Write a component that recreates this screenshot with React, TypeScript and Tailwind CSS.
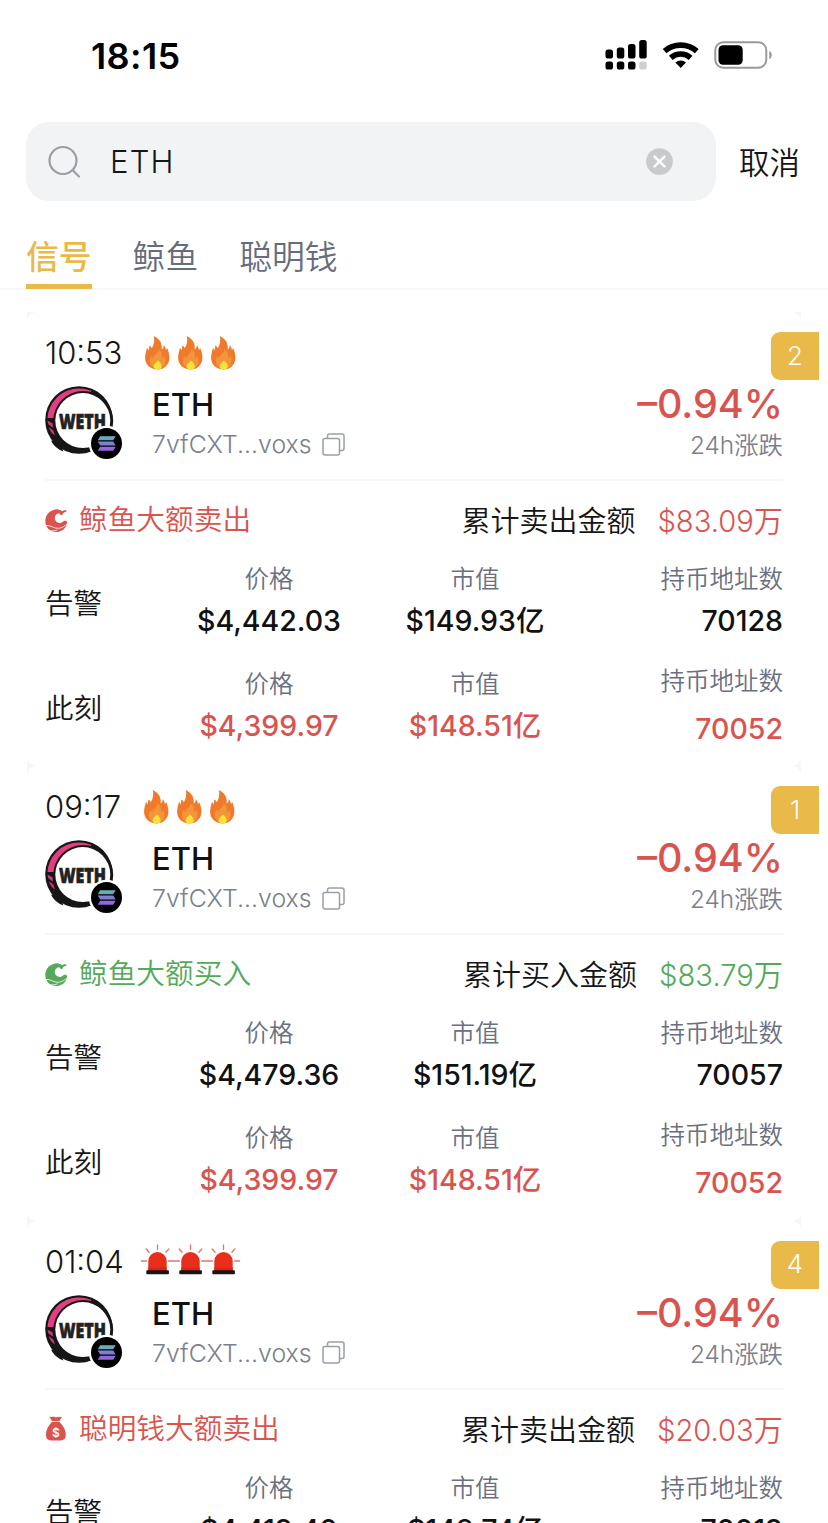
import { useState } from 'react';
import type { ReactNode } from 'react';

interface Quote {
  price: string;
  cap: string;
  holders: string;
}
interface Signal {
  id: number;
  time: string;
  level: 'fire' | 'siren';
  count: number;
  kind: 'whale' | 'smart';
  side: 'buy' | 'sell';
  title: string;
  totalLabel: string;
  total: string;
  alert: Quote;
  now?: Quote;
}

const signals: Signal[] = [
  {
    id: 1,
    time: '10:53',
    level: 'fire',
    count: 2,
    kind: 'whale',
    side: 'sell',
    title: '鲸鱼大额卖出',
    totalLabel: '累计卖出金额',
    total: '$83.09万',
    alert: { price: '$4,442.03', cap: '$149.93亿', holders: '70128' },
    now: { price: '$4,399.97', cap: '$148.51亿', holders: '70052' },
  },
  {
    id: 2,
    time: '09:17',
    level: 'fire',
    count: 1,
    kind: 'whale',
    side: 'buy',
    title: '鲸鱼大额买入',
    totalLabel: '累计买入金额',
    total: '$83.79万',
    alert: { price: '$4,479.36', cap: '$151.19亿', holders: '70057' },
    now: { price: '$4,399.97', cap: '$148.51亿', holders: '70052' },
  },
  {
    id: 3,
    time: '01:04',
    level: 'siren',
    count: 4,
    kind: 'smart',
    side: 'sell',
    title: '聪明钱大额卖出',
    totalLabel: '累计卖出金额',
    total: '$20.03万',
    alert: { price: '$4,419.40', cap: '$148.74亿', holders: '70019' },
  },
];

const tabs = ['信号', '鲸鱼', '聪明钱'];

function StatusBar() {
  return (
    <div className="flex h-[122px] items-start justify-between pt-[35px] pr-[56px] pl-[91px]">
      <span className="text-[36px] leading-[42px] font-semibold tracking-[0.4px] text-black">18:15</span>
      <svg width="167" height="30" viewBox="0 0 167 30" className="mt-[5px]">
        <rect x="0.5" y="9.5" width="7.5" height="9" rx="2.6" />
        <rect x="11.8" y="7.5" width="7.5" height="11" rx="2.6" />
        <rect x="23" y="4" width="7.5" height="14.5" rx="2.6" />
        <rect x="34.2" y="0" width="7.5" height="18.5" rx="2.6" />
        <rect x="0.5" y="21.5" width="7.5" height="8" rx="2.6" />
        <rect x="11.8" y="21.5" width="7.5" height="8" rx="2.6" />
        <rect x="23" y="21.5" width="7.5" height="8" rx="2.6" />
        <rect x="34.2" y="21.5" width="7.5" height="8" rx="2.6" fill="#d0d0d0" />
        <g fill="none" stroke="#000" strokeWidth="5.6">
          <path d="M59.600 11.200a24.500 24.500 0 0 1 32.200 0" />
          <path d="M65.800 17.800a15 15 0 0 1 19.800 0" />
        </g>
        <path d="M70.400 22.400a8.200 8.200 0 0 1 10.600 0L75.700 28Z" />
        <rect x="110.3" y="2.3" width="51" height="25.4" rx="8" fill="none" stroke="#999" strokeWidth="2" />
        <rect x="113.5" y="5.2" width="24.2" height="19.5" rx="4.5" />
        <path d="M164.300 10.800q2.600 1.200 2.600 4.200t-2.600 4.200Z" fill="#999" />
      </svg>
    </div>
  );
}

function Flame() {
  return (
    <svg width="33" height="34" viewBox="0 0 33 34">
      <path
        d="M12.800 0c6 3 8.600 7.400 7.900 13.400 1.500-.9 2-2.400 2-4.500 1.500 1.700 2 3.300 2.200 5.100.7-.4 1-1.100 1.100-2.200 1.600 3.600 2.400 6.500 2.400 9.700 0 7.300-5.200 12-12 12s-12.300-4.700-12.300-11.700c0-4 1.200-6.800 1.800-9.800 1 .7 1.300 1.600 1.300 2.600 1-1.600 1.100-3.300 1-5.100 1.300.5 2.100 1.500 2.600 2.800C13 8.600 13.800 4.600 12.800 0Z"
        fill="#f07a2b"
      />
      <path
        d="M17.600 13c-.2 4.500-4.600 5.600-5.400 9-.8-.6-1.100-1.400-1.100-2.600-1.400 1.800-2.200 3.300-2.200 5.700 0 4.700 3.400 7.700 7.700 7.700 4.700 0 7.900-3.100 7.900-7.600 0-2-.7-3.800-1.700-5.400-.2 1.300-.8 2.200-1.900 2.800C21.500 18.500 20.600 15.300 17.600 13Z"
        fill="#f3953a"
      />
      <path d="M16.800 24.500c2.300 1.800 3.900 3.600 3.900 5.900 0 2-1.700 3.200-3.900 3.200s-4.200-1.200-4.200-3.200c0-2.300 2.600-3.600 4.200-5.900Z" fill="#f8e339" />
    </svg>
  );
}

function Siren() {
  return (
    <svg width="33" height="34" viewBox="0 0 33 34" className="overflow-visible">
      <g stroke="#e0766c" strokeWidth="1.3" strokeLinecap="round">
        <path d="M16.500 1v4.500M5.200 5l2.900 3.300M27.800 5l-2.900 3.300M.4 17h5M27.600 17h5" />
      </g>
      <path d="M7.300 27.500V17.300a9.200 9.200 0 0 1 18.400 0v10.200Z" fill="#ea2e1c" />
      <path d="M7.300 27v-3.500h18.400V27Z" fill="#d3281b" />
      <rect x="5.300" y="26.300" width="22.600" height="4" rx="0.8" fill="#1d1416" />
    </svg>
  );
}

function TokenLogo() {
  return (
    <svg width="80" height="76" viewBox="0 0 80 76" className="-ml-px">
      <defs>
        <clipPath id="crescent">
          <rect x="0" y="0" width="47" height="33" />
        </clipPath>
        <linearGradient id="sol" x1="0" y1="0" x2="0" y2="1">
          <stop offset="0" stopColor="#67b9b4" />
          <stop offset="0.5" stopColor="#7d7fd0" />
          <stop offset="1" stopColor="#9b5fe0" />
        </linearGradient>
      </defs>
      <circle cx="35" cy="35" r="33.800" fill="#161616" />
      <circle cx="35" cy="35" r="31.600" fill="#e23e80" clipPath="url(#crescent)" />
      <path d="M3.400 35.500l5.200 2.800.4 4.500-4.800-3.500ZM4.600 42l4.800 3.600 1.600 4.800c-3-1.700-5-4.200-6.400-8.400Z" fill="#c23a70" />
      <circle cx="39.200" cy="36" r="30" fill="#161616" />
      <circle cx="38.800" cy="35.600" r="27.500" fill="#fff" />
      <path d="M0 46l8.200 10.500L13 68H0Z" fill="#fff" />
      <path d="M7 55.500l8.500 2.500 4 8.500C14.500 64.800 10 61.500 7 55.500Z" fill="#161616" />
      <text
        x="15"
        y="44"
        textLength="47"
        lengthAdjust="spacingAndGlyphs"
        className="font-['Open_Sans'] text-[20.5px] font-extrabold"
        fill="#222"
        stroke="#222"
        strokeWidth="0.7"
      >
        WETH
      </text>
      <circle cx="62.500" cy="58.500" r="17.800" fill="#fff" />
      <circle cx="62.500" cy="58.500" r="15.500" fill="#000" />
      <path d="M56.200 51.200h15.500l-2.500 4H53.700ZM53.700 56.500h15.500l2.500 4H56.200ZM56.200 61.800h15.500l-2.500 4H53.700Z" fill="url(#sol)" />
    </svg>
  );
}

function WhaleIcon() {
  return (
    <svg width="24" height="25" viewBox="0 0 24 25" fill="currentColor" className="-ml-px">
      <path d="M14.600 1.200C7.500.6 1.300 5.800 1.300 13c0 6.400 4.700 11 10.800 11 5.800 0 10.300-3.800 11.200-9.800-.7-1.200-1.800-1.700-3-1.400-1 .3-1.700 1.400-3.200 1.900-3.100.9-6.300-1.200-6.300-4.600 0-2.700 1.700-4.600 4.300-5.100.7 1.500 1.800 2.100 3.300 2.300.1-1.300.7-2.200 1.800-2.700 1-.4 1.900-.8 2.500-1.900-1.700-.6-3.200-.5-4.500.6-1.100-.9-2.300-1.400-3.600-1.100Z" />
      <path
        d="M.5 18c3.500-1.300 6 .1 8.800 1.300 3.600 1.500 7 1.400 10-.6 1.500-1 2.600-2 4.200-2.400M5.500 22.600c3.300.6 5.600.3 8-.8"
        fill="none"
        stroke="#fff"
        strokeWidth="0.8"
      />
    </svg>
  );
}

function MoneyBagIcon() {
  return (
    <svg width="24" height="25" viewBox="0 0 24 25" className="-ml-px">
      <path
        d="M5.400.6c1.600.8 2.800.2 4.300.2 1 0 1.500.5 2.500.5s1.600-.6 2.600-.6 1.900.5 3.200.1l-2.700 4.400H8ZM8 6h7.400c3.600 3.200 6.400 7.900 6.400 12.800 0 3.800-1.700 5.600-5.200 5.600H7.200c-3.500 0-5.200-1.800-5.200-5.600C2 13.900 4.500 9.200 8 6Z"
        fill="currentColor"
      />
      <text x="11.800" y="20.600" textAnchor="middle" fill="#fff" className="text-[12px] font-semibold">
        $
      </text>
    </svg>
  );
}

function CopyIcon() {
  return (
    <svg width="23" height="23" viewBox="0 0 23 23" fill="none" stroke="#9a9fa8" strokeWidth="1.500">
      <rect x="1" y="5.500" width="16.500" height="16.500" rx="2" />
      <path d="M5.500 5.500V3a2 2 0 0 1 2-2H20a2 2 0 0 1 2 2v12.500a2 2 0 0 1-2 2h-2.500" />
    </svg>
  );
}

function Cell({ label, value, className }: { label: string; value: string; className: string }) {
  return (
    <div className={`flex flex-col ${className}`}>
      <span className="text-[24.5px] leading-[30px] font-[350] text-[#6b7080]">{label}</span>
      <span className="text-[28.5px] leading-[36px] font-medium whitespace-nowrap">{value}</span>
    </div>
  );
}

function QuoteRow({ name, quote, live }: { name: string; quote: Quote; live?: boolean }) {
  return (
    <div className="grid h-[105px] grid-cols-[121px_206px_206px_205px]">
      <span className="mt-[22px] text-[28.5px] leading-[36px] font-[350] text-[#161616]">{name}</span>
      <Cell label="价格" value={quote.price} className={`items-center gap-[9px] ${live ? 'text-[#d9544f]' : 'text-[#111]'}`} />
      <Cell label="市值" value={quote.cap} className={`items-center gap-[9px] ${live ? 'text-[#d9544f]' : 'text-[#111]'}`} />
      <Cell
        label="持币地址数"
        value={quote.holders}
        className={`items-end ${live ? '-mt-[3px] gap-[15px] text-[#d9544f]' : 'gap-[9px] text-[#111]'}`}
      />
    </div>
  );
}

function SignalCard({ signal }: { signal: Signal }) {
  const tone = signal.side === 'buy' ? 'text-[#54a95a]' : 'text-[#d9544f]';
  const marks: ReactNode[] = [0, 1, 2].map((i) => (signal.level === 'fire' ? <Flame key={i} /> : <Siren key={i} />));

  return (
    <article className="relative h-[454.4px] rounded-[9px] bg-white px-[18px] pt-[22px]">
      <div className="absolute top-[20px] -right-[18px] grid h-[48px] w-[48px] place-items-center rounded-l-[9px] bg-[#e9b949] pb-[2px] text-[26px] font-light text-white">
        {signal.count}
      </div>

      <div className="flex h-[37px] items-center">
        <span className="text-[31px] leading-[37px] font-light text-[#161616]">{signal.time}</span>
        <div className={`flex ${signal.level === 'fire' ? 'ml-[19px]' : 'ml-[17px]'}`}>{marks}</div>
      </div>

      <div className="flex h-[110px] border-b-2 border-[#f7f7f7] pt-[14px]">
        <TokenLogo />
        <div className="ml-[28px] flex flex-col">
          <span className="text-[31px] leading-[40px] font-medium text-[#111]">ETH</span>
          <div className="flex items-center gap-[10px]">
            <span className="text-[24.8px] leading-[38px] font-light tracking-[0.03px] text-[#7b808c]">7vfCXT...voxs</span>
            <CopyIcon />
          </div>
        </div>
        <div className="ml-auto flex flex-col items-end">
          <span className="text-[39.5px] leading-[38px] font-medium text-[#d9544f]">–0.94%</span>
          <span className="mt-[4px] text-[24.4px] leading-[36px] font-[350] text-[#7b808c]">24h涨跌</span>
        </div>
      </div>

      <div className={`flex h-[83px] items-center pb-px ${tone}`}>
        <div className="mb-[4px] flex items-center gap-[11px]">
          {signal.kind === 'whale' ? <WhaleIcon /> : <MoneyBagIcon />}
          <span className="text-[28.7px] leading-[38px] font-[350]">{signal.title}</span>
        </div>
        <span className="ml-auto text-[29px] leading-[38px] font-[350] text-[#161616]">{signal.totalLabel}</span>
        <span className="ml-[22px] text-[29.2px] leading-[38px] font-[330]">{signal.total}</span>
      </div>

      <QuoteRow name="告警" quote={signal.alert} />
      {signal.now && <QuoteRow name="此刻" quote={signal.now} live />}
    </article>
  );
}

export default function App() {
  const [query, setQuery] = useState('ETH');
  const [tab, setTab] = useState(0);

  return (
    <main className="h-[1523px] w-[828px] overflow-hidden bg-white font-['Inter','Noto_Sans_CJK_SC',sans-serif]">
      <StatusBar />

      <div className="flex items-center pr-[27px] pl-[26px]">
        <div className="flex h-[79px] w-[690px] items-center rounded-[23px] bg-[#f1f3f5] pr-[43px] pl-[22px]">
          <svg width="34" height="34" viewBox="0 0 34 34" fill="none" stroke="#9b9fa4" strokeWidth="2.200">
            <circle cx="15" cy="15.500" r="13.500" />
            <path d="M24.500 25l6.500 6.500" strokeLinecap="round" />
          </svg>
          <input
            value={query}
            onChange={(e) => setQuery(e.target.value)}
            className="mt-px ml-[28px] min-w-0 flex-1 bg-transparent text-[31px] font-light tracking-[1.2px] text-[#161616] outline-none"
          />
          <button onClick={() => setQuery('')}>
            <svg width="27" height="27" viewBox="0 0 27 27">
              <circle cx="13.500" cy="13.500" r="13.300" fill="#c9cacb" />
              <path d="M7.800 7.800l11.400 11.400M19.200 7.800L7.800 19.200" stroke="#fff" strokeWidth="2.400" />
            </svg>
          </button>
        </div>
        <button className="mt-[2px] ml-[23px] text-[30.5px] leading-[40px] font-[350] whitespace-nowrap text-[#161616]">
          取消
        </button>
      </div>

      <nav className="flex h-[89px] gap-[41px] border-b-2 border-[#f7f7f7] pl-[26px]">
        {tabs.map((t, i) => (
          <button
            key={t}
            onClick={() => setTab(i)}
            className={`flex h-[88px] flex-col justify-end border-b-[5px] pb-[3px] text-[32.8px] leading-[48px] ${
              tab === i ? 'border-[#e9b949] font-medium text-[#e9b949]' : 'border-transparent font-[350] text-[#666c7c]'
            }`}
          >
            {t}
          </button>
        ))}
      </nav>

      <div className="mx-[27px] mt-[22px] bg-[#f6f6f6]">
        {signals.map((s) => (
          <SignalCard key={s.id} signal={s} />
        ))}
      </div>
    </main>
  );
}
